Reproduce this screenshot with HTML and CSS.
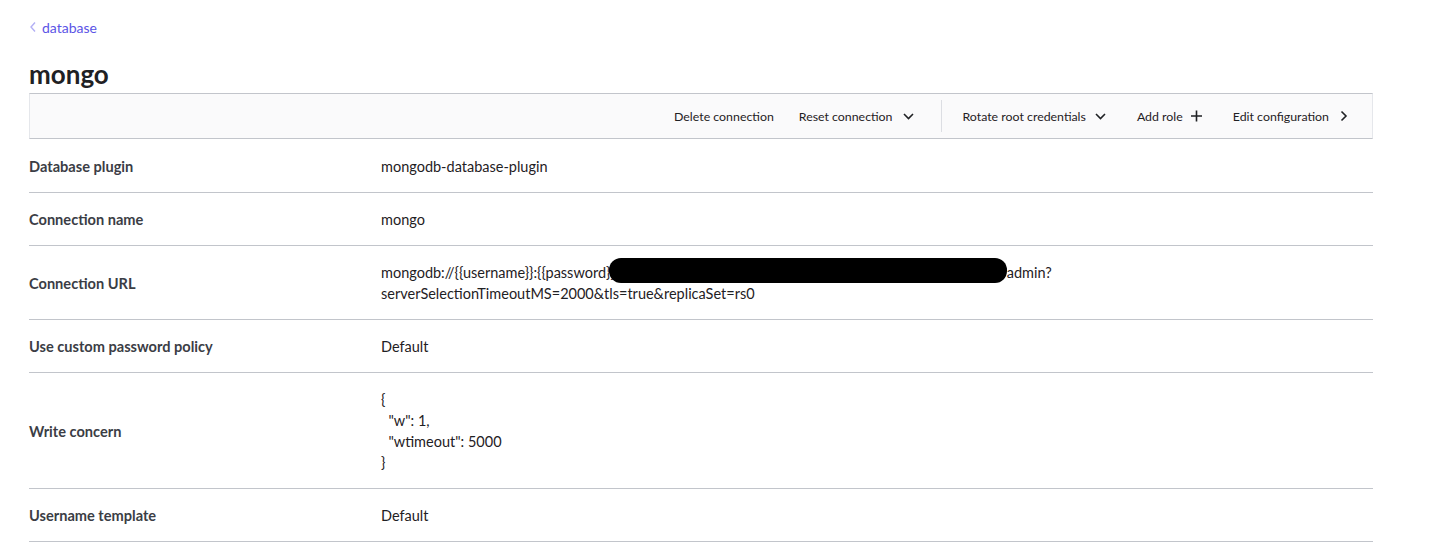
FILE: index.html
```html
<!DOCTYPE html>
<html>
<head>
<meta charset="utf-8">
<link rel="stylesheet" href="styles.css">
</head>
<body>
<div class="page">
  <nav class="crumbs">
    <svg class="crumb-ico" width="8" height="12" viewBox="0 0 8 12"><path d="M6 1.5 L2 6 L6 10.5" fill="none" stroke="#b3b0f5" stroke-width="1.4"/></svg>
    <a class="crumb-link">database</a>
  </nav>
  <h1 class="title">mongo</h1>
  <div class="toolbar">
    <span class="tb-btn">Delete connection</span>
    <span class="tb-btn tb-reset">Reset connection
      <svg class="tb-ico" width="11" height="12" viewBox="0 0 11 12"><path d="M1 4 L5.5 8.5 L10 4" fill="none" stroke="#1f2124" stroke-width="1.6"/></svg>
    </span>
    <span class="tb-sep"></span>
    <span class="tb-btn tb-rotate">Rotate root credentials
      <svg class="tb-ico" width="11" height="12" viewBox="0 0 11 12"><path d="M1 4 L5.5 8.5 L10 4" fill="none" stroke="#1f2124" stroke-width="1.6"/></svg>
    </span>
    <span class="tb-btn tb-add">Add role
      <svg class="tb-ico" width="11" height="12" viewBox="0 0 11 12"><path d="M5.5 0.5 V11.5 M0 6 H11" fill="none" stroke="#1f2124" stroke-width="1.6"/></svg>
    </span>
    <span class="tb-btn tb-edit">Edit configuration
      <svg class="tb-ico" width="8" height="12" viewBox="0 0 8 12"><path d="M1.5 1.5 L6 6 L1.5 10.5" fill="none" stroke="#1f2124" stroke-width="1.6"/></svg>
    </span>
  </div>
  <div class="rows">
    <div class="row"><div class="label">Database plugin</div><div class="value">mongodb-database-plugin</div></div>
    <div class="row"><div class="label">Connection name</div><div class="value">mongo</div></div>
    <div class="row"><div class="label">Connection URL</div><div class="value">mongodb://{{username}}:{{password}}<span class="redact"></span>admin?<br>serverSelectionTimeoutMS=2000&amp;tls=true&amp;replicaSet=rs0</div></div>
    <div class="row"><div class="label">Use custom password policy</div><div class="value">Default</div></div>
    <div class="row"><div class="label">Write concern</div><div class="value json">{
  "w": 1,
  "wtimeout": 5000
}</div></div>
    <div class="row"><div class="label">Username template</div><div class="value">Default</div></div>
  </div>
</div>
</body>
</html>
```
FILE: styles.css
```css
* { box-sizing: border-box; }
body {
  margin: 0;
  font-family: Lato, "Noto Sans", sans-serif;
  color: #1f2124;
  background: #fff;
}
.page {
  width: 1344px;
  margin-left: 29px;
  padding-top: 17px;
}
.crumbs {
  display: flex;
  align-items: center;
  gap: 5px;
  height: 20px;
  font-size: 14px;
}
.crumb-link { color: #5b54e6; }
.title {
  margin: 22px 0 0;
  font-size: 26px;
  line-height: 30px;
  font-weight: 700;
  color: #1f2124;
}
.toolbar {
  margin-top: 4px;
  height: 46px;
  display: flex;
  justify-content: flex-end;
  align-items: center;
  background: #fafafb;
  border-top: 1px solid #c2c5cb;
  border-bottom: 1px solid #c2c5cb;
  border-left: 1px solid #e5e7eb;
  border-right: 1px solid #e5e7eb;
  padding-right: 24px;
  font-size: 12.35px;
  font-weight: 400;
}
.tb-btn {
  display: flex;
  align-items: center;
  gap: 9px;
  color: #1f2124;
}
.tb-reset { margin-left: 25px; gap: 10px; }
.tb-rotate { margin-left: 21px; }
.tb-add { margin-left: 31px; gap: 8px; }
.tb-edit { margin-left: 31px; gap: 11px; }
.tb-sep {
  width: 1px;
  height: 32px;
  background: #dcdee3;
  margin-left: 27px;
}
.rows { padding-top: 1px; }
.row {
  display: flex;
  border-bottom: 1px solid #c2c5cb;
  padding: 16px 0 15px;
  font-size: 14.5px;
  line-height: 21px;
}
.label {
  width: 352px;
  flex: none;
  font-weight: 700;
  font-size: 14.6px;
  color: #3b3d45;
  align-self: center;
}
.value { color: #1f2124; }
.json { white-space: pre; }
.redact {
  display: inline-block;
  width: 398px;
  height: 25px;
  margin-top: -4px;
  margin-left: -6px;
  background: #000;
  border-radius: 12px;
  vertical-align: top;
}
```
